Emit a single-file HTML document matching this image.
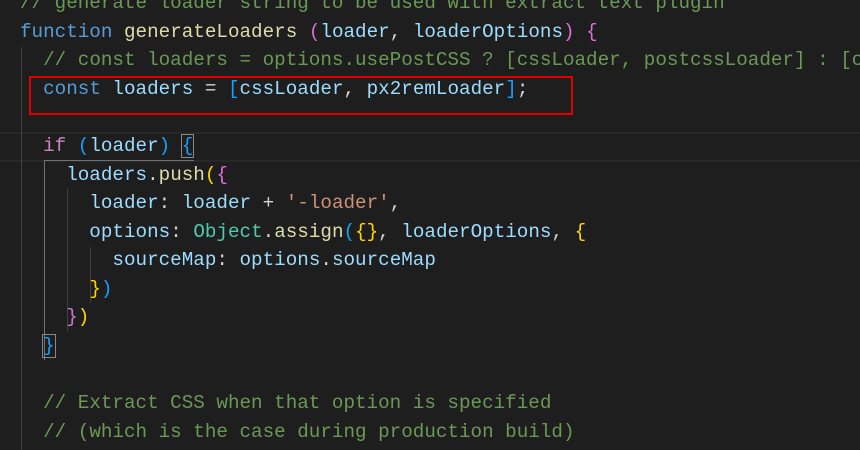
<!DOCTYPE html>
<html><head><meta charset="utf-8"><style>
html,body{margin:0;padding:0;width:860px;height:450px;overflow:hidden;background:#1e1e1e;}
#c{position:absolute;left:20px;top:-10.8px;font-family:"Liberation Mono",monospace;font-size:19.25px;line-height:28.57px;white-space:pre;color:#9cdcfe;}
.cm{color:#6a9955}.kw{color:#569cd6}.fn{color:#dcdcaa}.v{color:#9cdcfe}.ctl{color:#c586c0}.s{color:#ce9178}.t{color:#4ec9b0}.p{color:#d4d4d4}
.g{color:#ffd700}.m{color:#da70d6}.b{color:#179fff}
.guide{position:absolute;width:1px;background:#404040}
.box{outline:1px solid #888;}
</style></head><body>
<div style="position:absolute;left:0;top:132px;width:860px;height:26px;border-top:2px solid #282828;border-bottom:2px solid #282828"></div>
<div class="guide" style="left:21px;top:47px;height:403px"></div>
<div class="guide" style="left:44px;top:160px;height:200px;background:#707070"></div>
<div style="position:absolute;left:44px;top:160px;width:150px;height:1px;background:#707070"></div>
<div class="guide" style="left:67px;top:189px;height:142px"></div>
<div class="guide" style="left:90px;top:247px;height:56px"></div>
<div id="c"><span class="cm">// generate loader string to be used with extract text plugin</span>
<span class="kw">function</span> <span class="fn">generateLoaders</span> <span class="m">(</span>loader<span class="p">,</span> loaderOptions<span class="m">)</span> <span class="m">{</span>
  <span class="cm">// const loaders = options.usePostCSS ? [cssLoader, postcssLoader] : [c</span>
  <span class="kw">const</span> loaders <span class="p">=</span> <span class="b">[</span>cssLoader<span class="p">,</span> px2remLoader<span class="b">]</span><span class="p">;</span>

  <span class="ctl">if</span> <span class="b">(</span>loader<span class="b">)</span> <span class="b box">{</span>
    loaders<span class="p">.</span><span class="fn">push</span><span class="g">(</span><span class="m">{</span>
      loader<span class="p">:</span> loader <span class="p">+</span> <span class="s">'-loader'</span><span class="p">,</span>
      options<span class="p">:</span> <span class="t">Object</span><span class="p">.</span><span class="fn">assign</span><span class="b">(</span><span class="g">{}</span><span class="p">,</span> loaderOptions<span class="p">,</span> <span class="g">{</span>
        sourceMap<span class="p">:</span> options<span class="p">.</span>sourceMap
      <span class="g">}</span><span class="b">)</span>
    <span class="m">}</span><span class="g">)</span>
  <span class="b box">}</span>

  <span class="cm">// Extract CSS when that option is specified</span>
  <span class="cm">// (which is the case during production build)</span>
</div>
<div style="position:absolute;left:29px;top:76px;width:540px;height:35px;border:2px solid #e00000"></div>
</body></html>
